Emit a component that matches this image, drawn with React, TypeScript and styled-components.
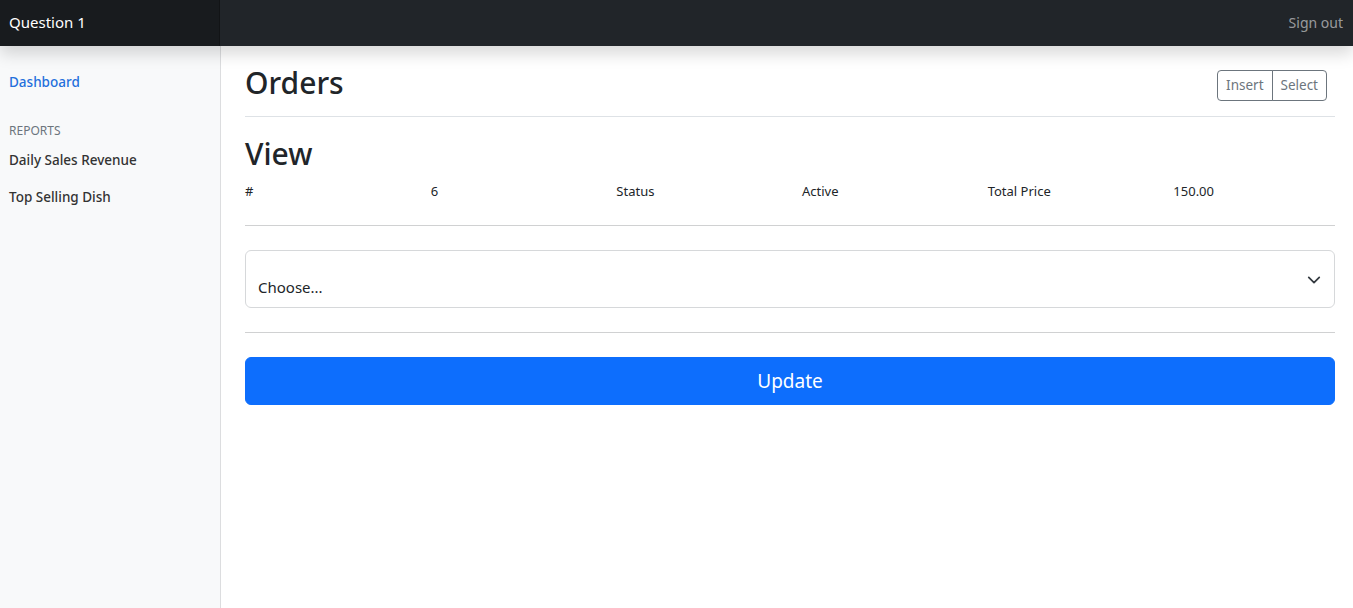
import React from "react";
import styled, { createGlobalStyle } from "styled-components";

const Global = createGlobalStyle`
  * { box-sizing: border-box; }
  html, body { margin: 0; padding: 0; }
  body {
    font-family: "Noto Sans", "Open Sans", sans-serif;
    font-size: 16px;
    line-height: 1.5;
    color: #212529;
    background: #fff;
  }
`;

const Navbar = styled.header`
  position: relative;
  z-index: 2;
  height: 46px;
  display: flex;
  align-items: center;
  justify-content: space-between;
  background: #212529;
  box-shadow: 0 8px 16px rgba(0, 0, 0, 0.15);
`;

const Brand = styled.a`
  width: 220px;
  height: 100%;
  display: flex;
  align-items: center;
  padding-left: 9px;
  padding-bottom: 2px;
  font-size: 15px;
  color: #fff;
  background: rgba(0, 0, 0, 0.25);
  box-shadow: inset -1px 0 0 rgba(0, 0, 0, 0.25);
  text-decoration: none;
`;

const SignOut = styled.a`
  padding-right: 10px;
  padding-bottom: 2px;
  font-size: 14px;
  color: rgba(255, 255, 255, 0.55);
  text-decoration: none;
`;

const Body = styled.div`
  display: flex;
  min-height: calc(100vh - 46px);
`;

const Sidebar = styled.nav`
  width: 221px;
  flex: none;
  background: #f8f9fa;
  border-right: 1px solid #dcdddf;
  padding-top: 18px;
`;

const NavLink = styled.a<{ $active?: boolean }>`
  display: block;
  padding: 8px 9px;
  font-size: 13.5px;
  font-weight: 500;
  line-height: 21px;
  color: ${(p) => (p.$active ? "#2470dc" : "#333")};
  text-decoration: none;
`;

const SectionHeading = styled.h6`
  margin: 21px 0 2px;
  padding: 0 9px;
  font-size: 12px;
  font-weight: 400;
  line-height: 18px;
  text-transform: uppercase;
  color: #6c757d;
`;

const Main = styled.main`
  flex: 1;
  padding: 0 18px 0 24px;
`;

const PageHeader = styled.div`
  display: flex;
  justify-content: space-between;
  align-items: center;
  padding-top: 16px;
  padding-bottom: 8px;
  margin-bottom: 18px;
  border-bottom: 1px solid #dee2e6;
`;

const Title = styled.h1`
  margin: 2px 0 6px;
  font-size: 30px;
  font-weight: 500;
  line-height: 38px;
`;

const BtnGroup = styled.div`
  display: flex;
  margin-right: 8px;
`;

const OutlineBtn = styled.button<{ $first?: boolean }>`
  height: 31px;
  font-family: inherit;
  font-size: 13.5px;
  line-height: 21px;
  padding: 4px 8px;
  color: #6c757d;
  background: transparent;
  border: 1px solid #6c757d;
  border-radius: ${(p) => (p.$first ? "4px 0 0 4px" : "0 4px 4px 0")};
  margin-left: ${(p) => (p.$first ? "0" : "-1px")};
`;

const SubTitle = styled.h2`
  margin: 0;
  font-size: 30px;
  font-weight: 500;
  line-height: 38px;
`;

const InfoRow = styled.div`
  display: grid;
  grid-template-columns: repeat(6, 1fr);
  margin: 0 -12px;
  padding: 8px 0;
`;

const InfoCell = styled.div`
  padding: 0 12px;
  font-size: 13px;
  line-height: 21px;
`;

const Rule = styled.hr`
  margin: 24px 0;
  border: 0;
  border-top: 1px solid #d0d1d2;
`;

const FirstRule = styled(Rule)`
  margin-top: 15px;
`;

const SelectWrap = styled.div`
  position: relative;
`;

const Select = styled.select`
  width: 100%;
  height: 58px;
  appearance: none;
  font-family: inherit;
  font-size: 15px;
  color: #212529;
  padding: 24px 36px 8px 12px;
  background: #fff;
  border: 1px solid #d6d8da;
  border-radius: 6px;
`;

const Chevron = styled.svg`
  position: absolute;
  right: 14px;
  top: 23px;
  width: 14px;
  height: 14px;
  pointer-events: none;
`;

const PrimaryBtn = styled.button`
  width: 100%;
  height: 48px;
  font-family: inherit;
  font-size: 19px;
  color: #fff;
  background: #0d6efd;
  border: 1px solid #0d6efd;
  border-radius: 6px;
`;

export default function App() {
  return (
    <>
      <Global />
      <Navbar>
        <Brand href="#">Question 1</Brand>
        <SignOut href="#">Sign out</SignOut>
      </Navbar>
      <Body>
        <Sidebar>
          <NavLink href="#" $active>
            Dashboard
          </NavLink>
          <SectionHeading>Reports</SectionHeading>
          <NavLink href="#">Daily Sales Revenue</NavLink>
          <NavLink href="#">Top Selling Dish</NavLink>
        </Sidebar>
        <Main>
          <PageHeader>
            <Title>Orders</Title>
            <BtnGroup>
              <OutlineBtn $first>Insert</OutlineBtn>
              <OutlineBtn>Select</OutlineBtn>
            </BtnGroup>
          </PageHeader>
          <SubTitle>View</SubTitle>
          <InfoRow>
            <InfoCell>#</InfoCell>
            <InfoCell>6</InfoCell>
            <InfoCell>Status</InfoCell>
            <InfoCell>Active</InfoCell>
            <InfoCell>Total Price</InfoCell>
            <InfoCell>150.00</InfoCell>
          </InfoRow>
          <FirstRule />
          <SelectWrap>
            <Select defaultValue="">
              <option value="">Choose...</option>
            </Select>
            <Chevron viewBox="0 0 16 16" fill="none" stroke="#343a40" strokeWidth="2" strokeLinecap="round" strokeLinejoin="round">
              <path d="m2 5 6 6 6-6" />
            </Chevron>
          </SelectWrap>
          <Rule />
          <PrimaryBtn>Update</PrimaryBtn>
        </Main>
      </Body>
    </>
  );
}
